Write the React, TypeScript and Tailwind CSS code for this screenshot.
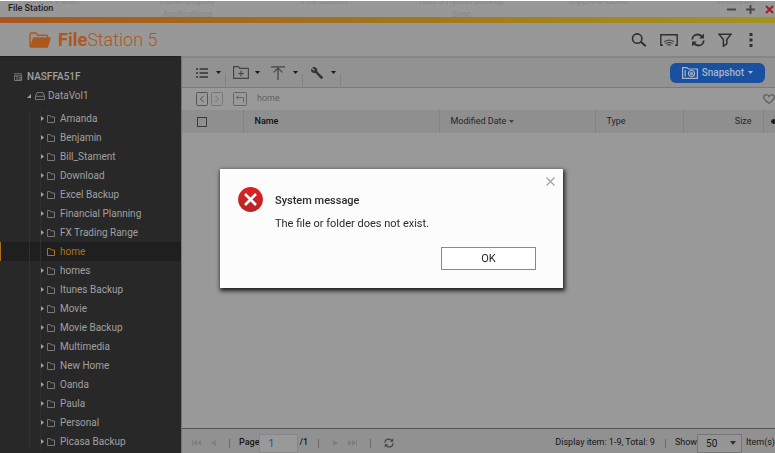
import React from "react";

const desktopIcons = [
    ["Control Panel"],
    ["HDMI Display", "Applications"],
    ["File Station"],
    ["HBS 3 Hybrid Backup", "Sync"],
    ["myQNAPcloud"],
    ["Antivirus"],
];

const folders = [
    "Amanda",
    "Benjamin",
    "Bill_Stament",
    "Download",
    "Excel Backup",
    "Financial Planning",
    "FX Trading Range",
    "home",
    "homes",
    "Itunes Backup",
    "Movie",
    "Movie Backup",
    "Multimedia",
    "New Home",
    "Oanda",
    "Paula",
    "Personal",
    "Picasa Backup",
];

function RefreshIcon({ className }: { className: string }) {
    return (
        <svg viewBox="0 0 14 14" className={className} fill="none" stroke="currentColor" strokeWidth="1.8">
            <path d="M1.3 6.6C1.3 3.6 3.8 1.5 6.7 1.5c2 0 3.4.8 4.4 2.2M12.7 7.4c0 3-2.5 5.1-5.4 5.1-2 0-3.4-.8-4.4-2.2" />
            <path d="M12.9.6v4.8H8.1zM1.1 13.4V8.6h4.8z" fill="currentColor" stroke="none" />
        </svg>
    );
}

function Caret() {
    return (
        <svg viewBox="0 0 5 3" className="w-[5px] h-[3px] shrink-0" fill="currentColor">
            <path d="M0 0h5L2.5 3z" />
        </svg>
    );
}

function TitleBar() {
    return (
        <div className="relative h-[17px] shrink-0 overflow-hidden border-t border-white bg-[#989898] flex items-center pl-2 pr-px">
            <div className="absolute -top-[6px] -left-[18px] flex text-[9px] leading-[13px] text-center font-medium text-[#8b8b8b]">
                {desktopIcons.map((lines) => (
                    <div key={lines[0]} className="w-[137px]">
                        {lines.map((line) => (
                            <div key={line}>{line}</div>
                        ))}
                    </div>
                ))}
            </div>
            <h1 className="relative text-[9px] font-medium text-[#1e1e1e]">File Station</h1>
            <div className="relative ml-auto flex items-center gap-[10px] text-[#45484f]">
                <button aria-label="Minimize">
                    <svg viewBox="0 0 9 9" className="w-[9px] h-[9px]" stroke="currentColor" strokeWidth="2">
                        <path d="M0 4.5h9" />
                    </svg>
                </button>
                <button aria-label="Maximize">
                    <svg viewBox="0 0 9 9" className="w-[9px] h-[9px]" stroke="currentColor" strokeWidth="2">
                        <path d="M0 4.5h9M4.5 0v9" />
                    </svg>
                </button>
                <button aria-label="Close" className="text-[#a31f22]">
                    <svg viewBox="0 0 9 9" className="w-[9px] h-[9px]" stroke="currentColor" strokeWidth="2">
                        <path d="M1 1l7 7M8 1L1 8" />
                    </svg>
                </button>
            </div>
        </div>
    );
}

function Header() {
    return (
        <header className="h-[33px] shrink-0 flex items-center pl-[29px] pr-[18px] bg-[#989898]">
            <svg viewBox="0 0 22 16" className="w-[22px] h-4" fill="none" stroke="#ad581c" strokeWidth="1.4">
                <path d="M1 15V2.5C1 1.5 1.5 1 2.4 1h4.4l2 2.3h8.4c1 0 1.5.5 1.5 1.4V6" />
                <path d="M4.6 6h16.5l-2.7 9H1.6z" fill="#ad581c" strokeLinejoin="round" />
            </svg>
            <div className="ml-[7px] text-lg leading-6 text-[#ad581c]">
                <span className="font-bold">File</span>
                <span className="font-light">Station 5</span>
            </div>
            <div className="ml-auto flex items-center gap-[13px] text-[#303030]">
                <button aria-label="Search">
                    <svg viewBox="0 0 16 14" className="w-4 h-[14px]" fill="none" stroke="currentColor" strokeWidth="1.6">
                        <circle cx="6.2" cy="5.6" r="4.7" />
                        <path d="M9.8 8.8l5 4.4" strokeWidth="2" />
                    </svg>
                </button>
                <button aria-label="Network media player">
                    <svg viewBox="0 0 18 12" className="w-[18px] h-3" fill="none" stroke="currentColor" strokeWidth="1.4">
                        <path d="M3 11.2H.8V.8h16.4v10.4H15" />
                        <path d="M4 8c2.6-2.4 7.4-2.4 10 0M5.4 9.700c2-1.600 5.200-1.600 7.200 0M7 11.300c1.200-.8 2.800-.8 4 0" strokeWidth="1" />
                    </svg>
                </button>
                <button aria-label="Refresh">
                    <RefreshIcon className="w-[14px] h-[14px]" />
                </button>
                <button aria-label="Filter">
                    <svg viewBox="0 0 14 14" className="w-[14px] h-[14px]" fill="none" stroke="currentColor" strokeWidth="1.5">
                        <path d="M1 1.2h12L8.8 6.6v4.2l-3.400 2.400V6.600z" />
                    </svg>
                </button>
                <button aria-label="More" className="w-3 flex justify-center">
                    <svg viewBox="0 0 4 14" className="w-1 h-[14px]" fill="currentColor">
                        <path d="M.5 0h3v3h-3zM.5 5.5h3v3h-3zM.5 11h3v3h-3z" />
                    </svg>
                </button>
            </div>
        </header>
    );
}

function Sidebar() {
    return (
        <nav aria-label="Folders" className="w-[181px] shrink-0 overflow-hidden bg-[#282828] text-[#a0a0a0] text-[10px] leading-[19px] pt-[10px] border-t border-[#202020]">
            <div className="flex items-center h-[19px] pl-[14px]">
                <svg viewBox="0 0 8 8" className="w-2 h-2" fill="none" stroke="#777" strokeWidth="1">
                    <path d="M0 .8h8M0 2.8h8M.5 2.5v5h7v-5M3 3v4.5M4.5 4.8H7M4.5 6.2H7" />
                </svg>
                <span className="ml-[5px] font-medium">NASFFA51F</span>
            </div>
            <div className="flex items-center h-[19px] pl-[27px]">
                <svg viewBox="0 0 4 4" className="w-1 h-1" fill="#a0a0a0">
                    <path d="M4 0v4H0z" />
                </svg>
                <svg viewBox="0 0 10 8" className="ml-1 w-[10px] h-2" fill="none" stroke="#777" strokeWidth="1">
                    <path d="M.5 4.3L2 .5h6l1.5 3.8v3.2h-9zM.5 4.3h9" />
                </svg>
                <a href="#datavol1" className="ml-[3px]">DataVol1</a>
            </div>
            <ul className="mt-1">
                {folders.map((name) => {
                    const active = name === "home";
                    return (
                        <li
                            key={name}
                            className={`flex items-center h-[19px] border-l ${active ? "bg-[#1f1f1f] border-[#a8701d] text-[#ab721d]" : "border-transparent"}`}
                        >
                            <span className="ml-7 h-full w-3 shrink-0 border-x border-[#303030]" />
                            <svg viewBox="0 0 3 5" className={`w-[3px] h-[5px] ${active ? "invisible" : ""}`} fill="#a0a0a0">
                                <path d="M0 0l3 2.5L0 5z" />
                            </svg>
                            <svg viewBox="0 0 8 8" className="ml-[3px] w-2 h-2" fill="none" stroke={active ? "#ab721d" : "#777"} strokeWidth="1">
                                <path d="M.5 7.5v-7h2.6l1 1.5h3.4v5.5z" />
                            </svg>
                            <a href={`#${name}`} className="ml-[5px] whitespace-nowrap">{name}</a>
                        </li>
                    );
                })}
            </ul>
        </nav>
    );
}

function ToolbarDivider() {
    return <span className="ml-1 w-px h-3 self-end mb-px bg-[#828282]" />;
}

function Toolbar() {
    return (
        <div className="h-[30px] shrink-0 flex items-center pl-[14px] pr-[10px] bg-[#929292] border-b border-[#7b7b7b] text-[#181818]">
            <button aria-label="View mode" className="flex items-center gap-2">
                <svg viewBox="0 0 12 10" className="w-3 h-[10px]" stroke="#333" strokeWidth="1.5">
                    <path d="M0 1h2M3.5 1H12M0 5h2M3.5 5H12M0 9h2M3.5 9H12" />
                </svg>
                <Caret />
            </button>
            <ToolbarDivider />
            <button aria-label="Create folder" className="ml-[7px] flex items-center gap-[6px]">
                <svg viewBox="0 0 16 13" className="w-4 h-[13px]" fill="none" stroke="#444" strokeWidth="1.1">
                    <path d="M.6 12.4V.6h4.8l1.5 1.8h8.5v10zM8 4.7v5.6M5.2 7.5h5.6" />
                </svg>
                <Caret />
            </button>
            <button aria-label="Upload" className="ml-[11px] flex items-center gap-2">
                <svg viewBox="0 0 14 14" className="w-[14px] h-[14px]" fill="none" stroke="#444" strokeWidth="1.2">
                    <path d="M0 .8h14M7 14V2M2.6 6.4L7 2l4.4 4.4" />
                </svg>
                <Caret />
            </button>
            <ToolbarDivider />
            <button aria-label="Tools" className="ml-2 flex items-center gap-2">
                <svg viewBox="0 0 12 12" className="w-3 h-3" fill="#333">
                    <path d="M1.2.4L3.8 3l-.7.9L.4 1.6C-.3 3.300.2 4.700 1.400 5.500c1 .7 2.100.7 3 .4l5.200 5.600c.6.6 1.400.5 1.900 0s.5-1.300-.1-1.900L6.200 4.500C6.600 3.100 6.300 1.900 5.300 1 4.200 0 2.500-.1 1.200.4z" />
                </svg>
                <Caret />
            </button>
            <ToolbarDivider />
            <button className="ml-auto flex items-center h-5 px-3 rounded-md bg-[#19509f] text-[#a9b6c9] text-[10px] font-medium">
                <svg viewBox="0 0 16 12" className="w-4 h-3 mr-1" fill="none" stroke="currentColor" strokeWidth="1.2">
                    <path d="M.6 11.4V.6H5l1.300 1.400h9.100v9.400zM3.200 3v6.500" />
                    <circle cx="9.500" cy="6.500" r="3" />
                    <circle cx="9.500" cy="6.500" r=".9" />
                </svg>
                Snapshot
                <span className="ml-1"><Caret /></span>
            </button>
        </div>
    );
}

function PathBar() {
    return (
        <div className="h-[22px] shrink-0 flex items-center pl-[14px] bg-[#999] text-[#666]">
            <button aria-label="Back" className="text-[#555]">
                <svg viewBox="0 0 12 14" className="w-3 h-[14px]" fill="none" stroke="currentColor">
                    <rect x=".5" y=".5" width="11" height="13" rx="1" />
                    <path d="M7.800 4L4.200 7l3.600 3" />
                </svg>
            </button>
            <button aria-label="Forward" className="ml-[3px] text-[#777]">
                <svg viewBox="0 0 12 14" className="w-3 h-[14px]" fill="none" stroke="currentColor">
                    <rect x=".5" y=".5" width="11" height="13" rx="1" />
                    <path d="M4.200 4l3.600 3-3.600 3" />
                </svg>
            </button>
            <button aria-label="Up" className="ml-[10px]">
                <svg viewBox="0 0 14 14" className="w-[14px] h-[14px]" fill="none" stroke="currentColor">
                    <rect x=".5" y=".5" width="13" height="13" rx="1" />
                    <path d="M5.500 3.500L3.500 5.500l2 2M3.500 5.500h7v5" />
                </svg>
            </button>
            <a href="#home" className="ml-[10px] text-[9px] text-[#606060]">home</a>
            <button aria-label="Favorite" className="ml-auto text-[#555]">
                <svg viewBox="0 0 12 10" className="w-3 h-[10px]" fill="none" stroke="currentColor" strokeWidth="1.100">
                    <path d="M6 9.300C3 7 .7 5.300.7 3.200.7 1.700 1.800.7 3.200.7 4.500.7 5.500 1.500 6 2.500 6.500 1.500 7.500.7 8.800.7c1.400 0 2.500 1 2.500 2.500C11.300 5.300 9 7 6 9.300z" />
                </svg>
            </button>
        </div>
    );
}

function FileTable() {
    return (
        <div className="flex-1 min-h-0 bg-[#999]">
            <table className="w-full table-fixed border-collapse text-[9px] text-[#252525]">
                <thead>
                    <tr className="h-[23px] bg-[#8f8f8f] text-left">
                        <th className="w-[61px] pl-[15px] font-normal">
                            <input type="checkbox" aria-label="Select all" className="block appearance-none w-[10px] h-[10px] border border-[#3c3c3c]" />
                        </th>
                        <th className="pl-[11px] border-l border-[#838383] font-medium text-[#111]">Name</th>
                        <th className="w-[156px] pl-[11px] border-l border-[#838383] font-normal">
                            <span className="flex items-center gap-[3px]">
                                Modified Date
                                <span className="text-[#444]"><Caret /></span>
                            </span>
                        </th>
                        <th className="w-[88px] pl-[11px] border-l border-[#838383] font-normal">Type</th>
                        <th className="w-[80px] pr-[11px] border-l border-[#838383] text-right font-normal">Size</th>
                        <th className="w-3 border-l border-[#838383]">
                            <button aria-label="Add column" className="flex w-full justify-end overflow-hidden">
                                <svg viewBox="0 0 4 5" className="w-1 h-[5px]" stroke="#111" strokeWidth="2">
                                    <path d="M0 2.500h4M2.500 0v5" />
                                </svg>
                            </button>
                        </th>
                    </tr>
                </thead>
            </table>
        </div>
    );
}

function Divider({ className }: { className: string }) {
    return <span className={`w-px h-[9px] bg-[#6f6a5e] ${className}`} />;
}

function Footer() {
    return (
        <footer className="h-[25px] shrink-0 flex items-center pt-1 pl-[10px] border-t border-[#555] bg-[#919191] text-[9px] text-[#151515] whitespace-nowrap">
            <div className="flex items-center text-[#7f7f7f]">
                <button aria-label="First page">
                    <svg viewBox="0 0 9 6" className="w-[9px] h-[6px]" fill="currentColor">
                        <path d="M0 0h1v6H0zM5 0v6L1 3zM9 0v6L5 3z" />
                    </svg>
                </button>
                <button aria-label="Previous page" className="ml-[10px]">
                    <svg viewBox="0 0 5 6" className="w-[5px] h-[6px]" fill="currentColor">
                        <path d="M5 0v6L0 3z" />
                    </svg>
                </button>
            </div>
            <Divider className="ml-[13px]" />
            <label htmlFor="page" className="ml-[9px] font-medium">Page</label>
            <input id="page" defaultValue="1" className="w-[39px] h-[19px] pl-2 border border-[#878787] bg-[#999] text-[10px] text-[#1d4f93]" />
            <span className="ml-px font-medium">/1</span>
            <Divider className="ml-[10px]" />
            <div className="flex items-center text-[#7f7f7f]">
                <button aria-label="Next page" className="ml-[14px]">
                    <svg viewBox="0 0 5 6" className="w-[5px] h-[6px]" fill="currentColor">
                        <path d="M0 0v6l5-3z" />
                    </svg>
                </button>
                <button aria-label="Last page" className="ml-[10px]">
                    <svg viewBox="0 0 9 6" className="w-[9px] h-[6px]" fill="currentColor">
                        <path d="M8 0h1v6H8zM4 0v6l4-3zM0 0v6l4-3z" />
                    </svg>
                </button>
            </div>
            <Divider className="ml-[13px]" />
            <button aria-label="Reload" className="ml-[13px] text-[#444]">
                <RefreshIcon className="w-[10px] h-[10px]" />
            </button>
            <span className="ml-auto">Display item: 1-9, Total: 9</span>
            <Divider className="ml-[10px]" />
            <label htmlFor="per-page" className="ml-[9px]">Show</label>
            <div className="relative flex items-center">
                <select id="per-page" className="appearance-none w-[45px] h-[19px] pl-2 border border-[#767676] bg-[#959595] text-[10px]">
                    <option>50</option>
                </select>
                <svg viewBox="0 0 6 4" className="pointer-events-none absolute right-[6px] w-[6px] h-1" fill="#333">
                    <path d="M0 0h6L3 4z" />
                </svg>
            </div>
            <span className="ml-1">Item(s)</span>
        </footer>
    );
}

function MessageDialog() {
    return (
        <div className="fixed inset-0 flex items-center justify-center pl-2 pt-1">
            <div role="dialog" aria-labelledby="message-title" className="relative w-[343px] bg-[#fcfcfc] p-[18px] shadow-[1px_2px_4px_1px_#222]">
                <button aria-label="Close message" className="absolute top-2 right-2">
                    <svg viewBox="0 0 9 9" className="w-[9px] h-[9px]" stroke="#a3a3a3" strokeWidth="1.300">
                        <path d="M.5.5l8 8M8.500.5l-8 8" />
                    </svg>
                </button>
                <div className="flex gap-3">
                    <svg viewBox="0 0 25 25" className="w-[25px] h-[25px] shrink-0">
                        <defs>
                            <linearGradient id="error" x1="0" y1="0" x2="0" y2="1">
                                <stop offset="0" stopColor="#e0201f" />
                                <stop offset="1" stopColor="#b3262a" />
                            </linearGradient>
                        </defs>
                        <circle cx="12.500" cy="12.500" r="12.400" fill="url(#error)" />
                        <path d="M7 7l11 11M18 7L7 18" stroke="#fff" strokeWidth="2.600" />
                    </svg>
                    <div className="pt-[2px] text-[11px] leading-[23px] text-[#2b2b2b]">
                        <h2 id="message-title" className="font-medium">System message</h2>
                        <p>The file or folder does not exist.</p>
                    </div>
                </div>
                <div className="mt-3 pr-[9px] flex justify-end">
                    <button className="w-[95px] h-[23px] pt-px border border-[#888] bg-white text-[11px] text-[#222]">OK</button>
                </div>
            </div>
        </div>
    );
}

export default function App() {
    return (
        <div className="h-screen flex flex-col overflow-hidden bg-[#999] font-['Roboto',sans-serif]">
            <TitleBar />
            <div className="h-[6px] shrink-0 bg-linear-to-r from-[#a9561c] via-[#a1761c] to-[#a49321]" />
            <Header />
            <div className="flex-1 min-h-0 flex">
                <Sidebar />
                <main className="flex-1 min-w-0 flex flex-col border-t-2 border-l border-t-[#858585] border-l-[#6f7577]">
                    <Toolbar />
                    <PathBar />
                    <FileTable />
                    <Footer />
                </main>
            </div>
            <MessageDialog />
        </div>
    );
}
